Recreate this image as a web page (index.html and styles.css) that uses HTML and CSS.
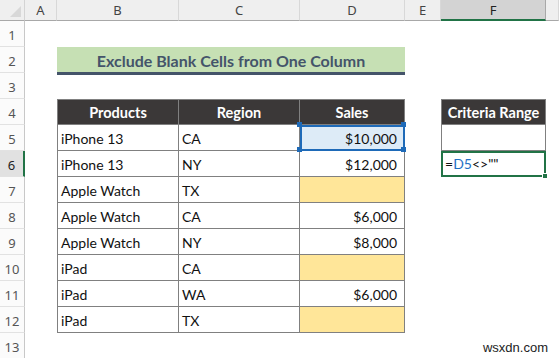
FILE: index.html
```html
<!DOCTYPE html>
<html lang="en">
<head>
    <meta charset="UTF-8">
    <meta name="viewport" content="width=device-width, initial-scale=1.0">
    <title>Exclude Blank Cells from One Column</title>
    <link rel="stylesheet" href="styles.css">
</head>
<body>
    <div class="sheet">
        <!-- column headers -->
        <div class="corner"><span class="corner-mark"></span></div>
        <div class="col-head">A</div>
        <div class="col-head">B</div>
        <div class="col-head">C</div>
        <div class="col-head">D</div>
        <div class="col-head">E</div>
        <div class="col-head active">F</div>
        <div class="col-head"></div>

        <!-- row 1 -->
        <div class="row-head">1</div>
        <div></div><div></div><div></div><div></div><div></div><div></div><div></div>

        <!-- row 2 -->
        <div class="row-head">2</div>
        <div></div>
        <div class="title">Exclude Blank Cells from One Column</div>
        <div></div><div></div><div></div>

        <!-- row 3 -->
        <div class="row-head">3</div>
        <div></div><div></div><div></div><div></div><div></div><div></div><div></div>

        <!-- row 4 -->
        <div class="row-head">4</div>
        <div></div>
        <div class="th first">Products</div>
        <div class="th">Region</div>
        <div class="th">Sales</div>
        <div></div>
        <div class="th first">Criteria Range</div>
        <div></div>

        <!-- row 5 -->
        <div class="row-head">5</div>
        <div></div>
        <div class="td first">iPhone 13</div>
        <div class="td">CA</div>
        <div class="td num selected">
            $10,000
            <span class="knob tl"></span><span class="knob tr"></span>
            <span class="knob bl"></span><span class="knob br"></span>
        </div>
        <div></div>
        <div class="td first"></div>
        <div></div>

        <!-- row 6 -->
        <div class="row-head active">6</div>
        <div></div>
        <div class="td first">iPhone 13</div>
        <div class="td">NY</div>
        <div class="td num">$12,000</div>
        <div></div>
        <div class="active-cell">=<span class="ref">D5</span>&lt;&gt;""<span class="fill-handle"></span></div>
        <div></div>

        <!-- row 7 -->
        <div class="row-head">7</div>
        <div></div>
        <div class="td first">Apple Watch</div>
        <div class="td">TX</div>
        <div class="td num blank"></div>
        <div></div><div></div><div></div>

        <!-- row 8 -->
        <div class="row-head">8</div>
        <div></div>
        <div class="td first">Apple Watch</div>
        <div class="td">CA</div>
        <div class="td num">$6,000</div>
        <div></div><div></div><div></div>

        <!-- row 9 -->
        <div class="row-head">9</div>
        <div></div>
        <div class="td first">Apple Watch</div>
        <div class="td">NY</div>
        <div class="td num">$8,000</div>
        <div></div><div></div><div></div>

        <!-- row 10 -->
        <div class="row-head">10</div>
        <div></div>
        <div class="td first">iPad</div>
        <div class="td">CA</div>
        <div class="td num blank"></div>
        <div></div><div></div><div></div>

        <!-- row 11 -->
        <div class="row-head">11</div>
        <div></div>
        <div class="td first">iPad</div>
        <div class="td">WA</div>
        <div class="td num">$6,000</div>
        <div></div><div></div><div></div>

        <!-- row 12 -->
        <div class="row-head">12</div>
        <div></div>
        <div class="td first">iPad</div>
        <div class="td">TX</div>
        <div class="td num blank"></div>
        <div></div><div></div><div></div>

        <!-- row 13 -->
        <div class="row-head">13</div>
        <div></div><div></div><div></div><div></div><div></div><div></div><div></div>

        <div class="watermark">wsxdn.com</div>
    </div>
</body>
</html>
```

FILE: styles.css
```css
* {
    margin: 0;
    padding: 0;
    box-sizing: border-box;
}

body {
    background: #fff;
    font-family: Lato, 'Noto Sans', sans-serif;
    overflow: hidden;
}

.sheet {
    position: relative;
    display: grid;
    grid-template-columns: 25px 32px 122px 121px 105px 36px 105px 1fr;
    grid-template-rows: 21px repeat(13, 26px);
    width: 559px;
    height: 358px;
    font-size: 14px;
    color: #111;
}

/* headers */
.corner {
    position: relative;
    background: #efefef;
    border-right: 1px solid #d4d4d4;
    border-bottom: 1px solid #a8a8a8;
}

.corner-mark {
    position: absolute;
    right: 3px;
    bottom: 3px;
    width: 0;
    height: 0;
    border-left: 11px solid transparent;
    border-bottom: 11px solid #d8d8d8;
}

.col-head {
    display: flex;
    align-items: center;
    justify-content: center;
    background: #efefef;
    border-right: 1px solid #d8d8d8;
    border-bottom: 1px solid #a8a8a8;
    font-family: 'Noto Sans', sans-serif;
    font-size: 13px;
    color: #444;
}

.col-head.active {
    background: #d3d3d3;
    border-bottom: 2px solid #217346;
    border-right-color: #a8a8a8;
    color: #222;
}

.row-head {
    display: flex;
    align-items: center;
    justify-content: center;
    padding-top: 2px;
    background: #fbfbfb;
    border-right: 1px solid #c8c8c8;
    border-bottom: 1px solid #e2e2e2;
    font-family: 'Noto Sans', sans-serif;
    font-size: 13px;
    color: #555;
}

.row-head.active {
    background: #e1e1e1;
    border-right: 2px solid #217346;
    color: #222;
}

/* title band */
.title {
    grid-column: span 3;
    display: flex;
    align-items: center;
    justify-content: center;
    padding-top: 1px;
    background: #c6e0b4;
    border-bottom: 1px solid #44546a;
    box-shadow: 0 2px 0 #44546a;
    font-weight: bold;
    font-size: 16px;
    color: #44546a;
}

/* table cells */
.th,
.td {
    display: flex;
    align-items: flex-end;
    padding: 0 3px 3px;
    border-right: 1px solid #808080;
    border-bottom: 1px solid #808080;
    white-space: nowrap;
}

.th {
    justify-content: center;
    background: #3b3838;
    border-top: 1px solid #808080;
    font-size: 14.5px;
    font-weight: bold;
    color: #fff;
}

.first {
    border-left: 1px solid #808080;
}

.num {
    justify-content: flex-end;
    padding-right: 7px;
}

.blank {
    background: #ffe699;
}

.selected {
    position: relative;
    background: #ddebf7;
    outline: 2px solid #1e6ab8;
    outline-offset: -2px;
}

.knob {
    position: absolute;
    width: 5px;
    height: 5px;
    background: #1e6ab8;
}

.knob.tl { left: -3px; top: -3px; }
.knob.tr { right: -2px; top: -3px; }
.knob.bl { left: -3px; bottom: -2px; }
.knob.br { right: -2px; bottom: -2px; }

.active-cell {
    position: relative;
    display: flex;
    align-items: flex-end;
    padding: 0 2px 3px;
    border: 2px solid #217346;
    font-size: 14px;
    color: #111;
}

.ref {
    color: #1f6fc5;
}

.fill-handle {
    position: absolute;
    right: -4px;
    bottom: -4px;
    width: 6px;
    height: 6px;
    background: #217346;
    border: 1px solid #fff;
}

.watermark {
    position: absolute;
    right: 11px;
    bottom: 3px;
    font-family: 'Liberation Sans', sans-serif;
    font-size: 13px;
    color: #222;
}
```
